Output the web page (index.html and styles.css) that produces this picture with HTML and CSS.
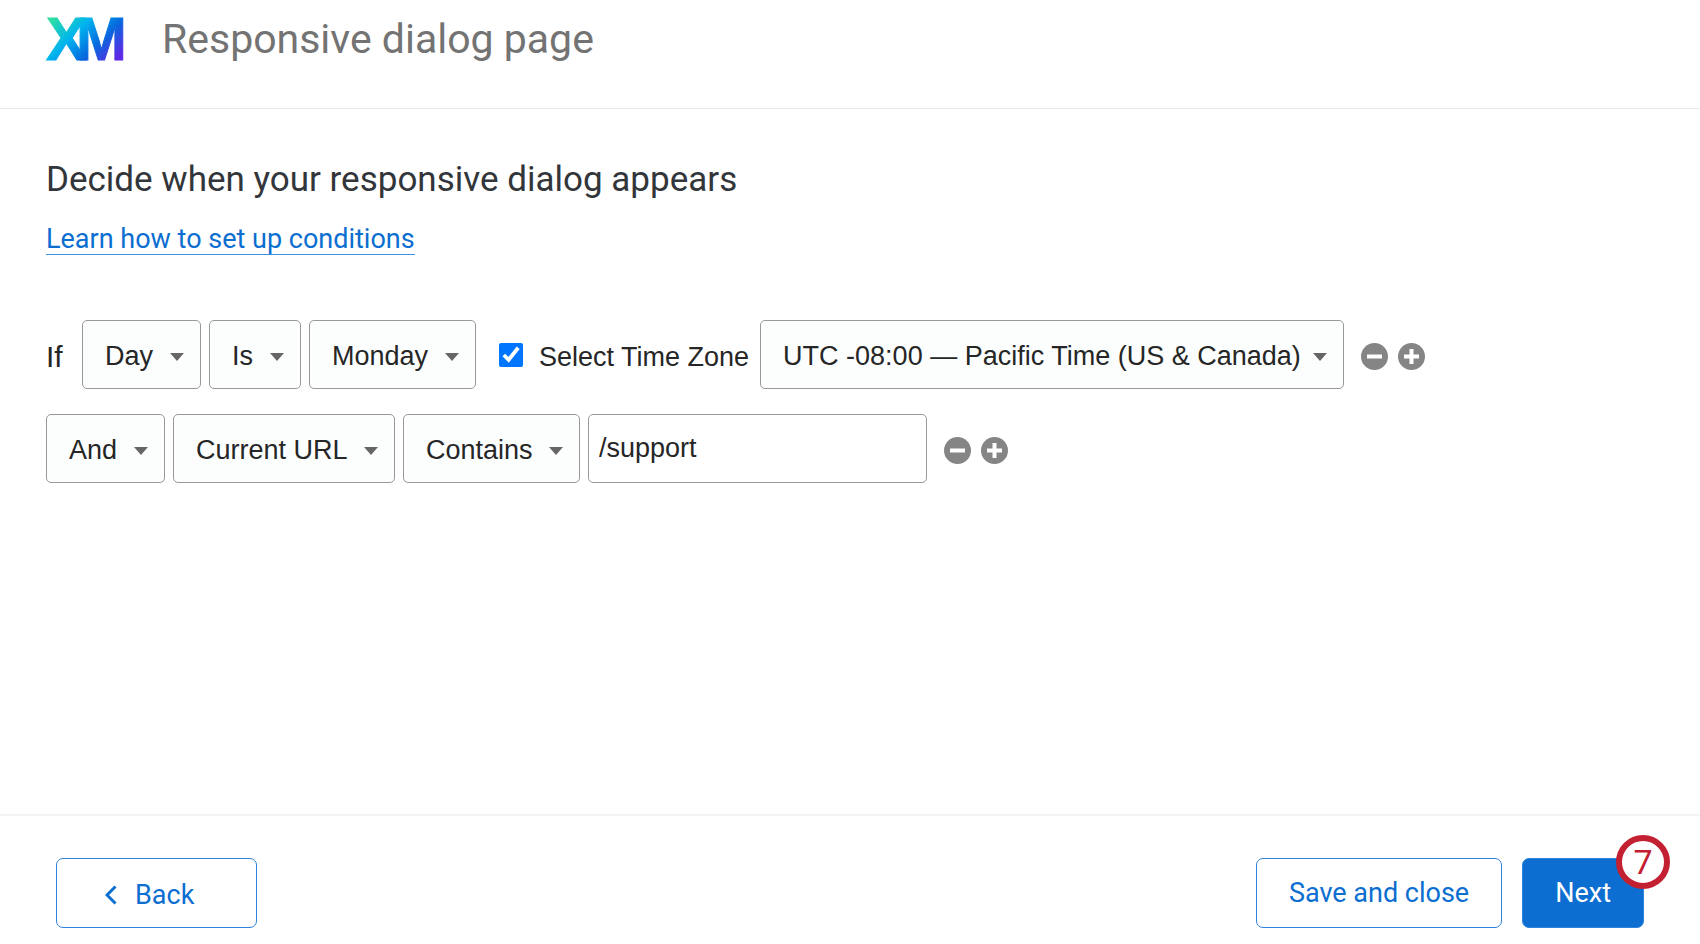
FILE: index.html
```html
<!DOCTYPE html>
<html lang="en">
<head>
    <meta charset="utf-8">
    <title>Responsive dialog page</title>
    <link rel="stylesheet" href="styles.css">
</head>
<body>
    <header class="header">
        <svg class="logo" viewBox="0 0 78 44" role="img" aria-label="XM">
            <defs>
                <linearGradient id="xm" gradientUnits="userSpaceOnUse" x1="10" y1="-4" x2="66" y2="52">
                    <stop offset="0" stop-color="#2fe0a0"/>
                    <stop offset="0.35" stop-color="#00b4ef"/>
                    <stop offset="0.65" stop-color="#0768dd"/>
                    <stop offset="0.95" stop-color="#5f28e6"/>
                </linearGradient>
            </defs>
            <text class="logo-text" x="0 30" y="43" fill="url(#xm)" stroke="url(#xm)">XM</text>
        </svg>
        <span class="page-name">Responsive dialog page</span>
    </header>

    <main class="content">
        <h1>Decide when your responsive dialog appears</h1>
        <a class="help-link" href="#">Learn how to set up conditions</a>

        <form class="conditions">
            <div class="row">
                <span class="joiner">If</span>
                <select aria-label="Condition type"><option>Day</option></select>
                <select aria-label="Operator"><option>Is</option></select>
                <select aria-label="Day"><option>Monday</option></select>
                <label class="zone-label"><input type="checkbox" checked> <span>Select Time Zone</span></label>
                <select class="zone" aria-label="Time zone"><option>UTC -08:00 — Pacific Time (US &amp; Canada)</option></select>
                <div class="row-actions">
                    <button type="button" aria-label="Remove condition">
                        <svg viewBox="0 0 27 27"><circle cx="13.5" cy="13.5" r="13.5"/><path d="M6 13.5h15"/></svg>
                    </button>
                    <button type="button" aria-label="Add condition">
                        <svg viewBox="0 0 27 27"><circle cx="13.5" cy="13.5" r="13.5"/><path d="M6 13.5h15M13.5 6v15"/></svg>
                    </button>
                </div>
            </div>
            <div class="row">
                <select aria-label="Join with"><option>And</option></select>
                <select aria-label="Condition type"><option>Current URL</option></select>
                <select aria-label="Operator"><option>Contains</option></select>
                <input class="value" type="text" value="/support" aria-label="URL value">
                <div class="row-actions">
                    <button type="button" aria-label="Remove condition">
                        <svg viewBox="0 0 27 27"><circle cx="13.5" cy="13.5" r="13.5"/><path d="M6 13.5h15"/></svg>
                    </button>
                    <button type="button" aria-label="Add condition">
                        <svg viewBox="0 0 27 27"><circle cx="13.5" cy="13.5" r="13.5"/><path d="M6 13.5h15M13.5 6v15"/></svg>
                    </button>
                </div>
            </div>
        </form>
    </main>

    <footer class="footer">
        <button class="btn btn-back" type="button">
            <svg class="chevron" viewBox="0 0 12 20"><path d="M10.5 1.5L2 10l8.500 8.500"/></svg>
            Back
        </button>
        <button class="btn btn-save" type="button">Save and close</button>
        <div class="next">
            <button class="btn btn-next" type="button">Next</button>
            <span class="step">7</span>
        </div>
    </footer>
</body>
</html>
```

FILE: styles.css
```css
* {
    box-sizing: border-box;
}
body {
    margin: 0;
    min-height: 100vh;
    display: flex;
    flex-direction: column;
    background: #fff;
    color: #262626;
    font-family: Roboto, sans-serif;
    font-size: 27px;
}
.header {
    display: flex;
    align-items: center;
    gap: 38px;
    height: 109px;
    padding: 0 46px 30px;
    border-bottom: 1px solid #e9e9e9;
}
.logo {
    width: 78px;
    height: 44px;
    overflow: visible;
}
.logo-text {
    font-family: "Liberation Sans", Arial, sans-serif;
    font-weight: bold;
    font-size: 61px;
    stroke-width: 1;
}
.page-name {
    font-size: 41px;
    font-weight: 400;
    color: #737373;
}
.content {
    flex: 1;
    padding: 50px 46px 0;
}
h1 {
    margin: 0 0 18px;
    font-size: 35px;
    font-weight: 400;
    line-height: 42px;
    color: #32363a;
}
.help-link {
    display: inline-block;
    padding-top: 6px;
    line-height: 29px;
    color: #0b6ed0;
    text-decoration: none;
    border-bottom: 1px solid #3b8fe6;
}
.conditions {
    display: flex;
    flex-direction: column;
    gap: 25px;
    margin-top: 65px;
    font-family: "Liberation Sans", Arial, sans-serif;
}
.row {
    display: flex;
    align-items: center;
    gap: 8px;
}
.joiner {
    width: 28px;
    padding-top: 4px;
    font-size: 30px;
}
select,
.value {
    height: 69px;
    border: 1px solid #999;
    border-radius: 5px;
    background-color: #fcfefe;
    color: #262626;
    font: inherit;
}
select {
    appearance: none;
    padding: 2px 46px 0 22px;
    background-image: url("data:image/svg+xml,%3Csvg xmlns='http://www.w3.org/2000/svg' width='14' height='8'%3E%3Cpath d='M0 0h14L7 8z' fill='%23666'/%3E%3C/svg%3E");
    background-repeat: no-repeat;
    background-position: right 16px top 32px;
}
.zone {
    width: 584px;
    padding-right: 36px;
}
.value {
    width: 339px;
    padding: 0 10px;
    background-color: #fff;
}
.zone-label {
    display: flex;
    align-items: center;
    gap: 16px;
    padding: 0 3px 0 15px;
}
.zone-label span {
    padding-top: 6px;
}
.zone-label input {
    width: 24px;
    height: 24px;
    margin: 0;
    accent-color: #0075ff;
}
.row-actions {
    display: flex;
    gap: 10px;
    padding: 3px 0 0 9px;
}
.row-actions button {
    padding: 0;
    border: 0;
    background: none;
    cursor: pointer;
}
.row-actions svg {
    display: block;
    width: 27px;
    height: 27px;
    fill: #858585;
    stroke: #fff;
    stroke-width: 4;
}
.row-actions circle {
    stroke: none;
}
.footer {
    display: flex;
    gap: 20px;
    padding: 42px 56px 16px;
    border-top: 2px solid #f3f3f3;
}
.btn {
    height: 70px;
    padding: 0 32px;
    border: 1px solid #2f83dc;
    border-radius: 7px;
    background: #fff;
    color: #0b6ed0;
    font: inherit;
    cursor: pointer;
}
.btn-back {
    display: flex;
    align-items: center;
    gap: 18px;
    padding: 3px 62px 0 48px;
    margin-right: auto;
}
.chevron {
    width: 12px;
    height: 20px;
    fill: none;
    stroke: #0b6ed0;
    stroke-width: 3;
}
.next {
    position: relative;
}
.btn-next {
    background: #0b6ed0;
    color: #fff;
}
.step {
    position: absolute;
    top: -23px;
    right: -26px;
    width: 54px;
    height: 54px;
    border: 6px solid #c32032;
    border-radius: 50%;
    background: #fff;
    color: #c32032;
    font-size: 34px;
    line-height: 42px;
    text-align: center;
}
```
